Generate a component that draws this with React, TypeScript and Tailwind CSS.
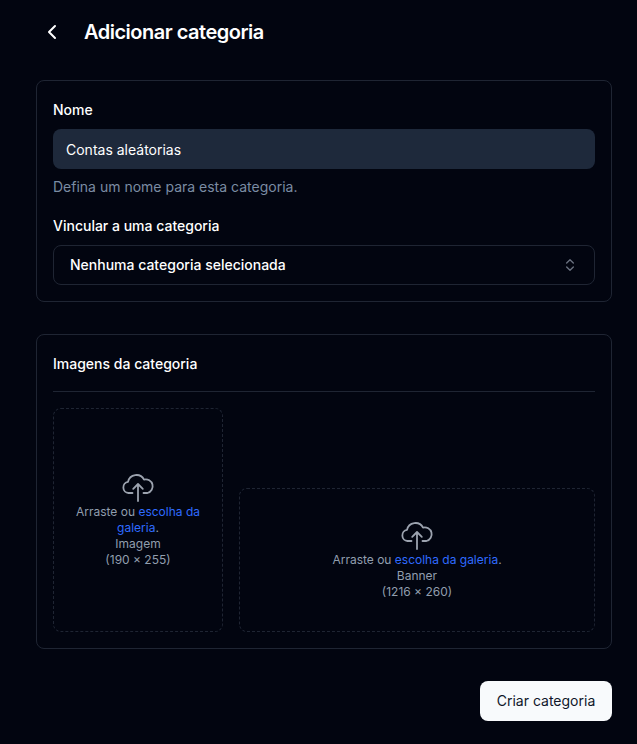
import { ChevronLeft, ChevronsUpDown } from 'lucide-react';

function CloudUp() {
  return (
    <svg width="36" height="32" viewBox="0 0 36 32" fill="none" stroke="#9ca3af" strokeWidth="1.8" strokeLinecap="round" strokeLinejoin="round">
      <path d="M12.5 21H8.5A5.6 5.6 0 0 1 8 9.9A8.6 8.6 0 0 1 24 7.6A6.9 6.9 0 0 1 27.5 21H23.5" />
      <path d="M18 29V12M13.2 16.8L18 12L22.8 16.8" />
    </svg>
  );
}

function Dropzone({ label, size, className }: { label: string; size: string; className: string }) {
  return (
    <div className={`flex flex-col items-center justify-center rounded-lg border border-dashed border-[#1f2533] px-4 text-center text-xs leading-4 text-[#919eae] ${className}`}>
      <CloudUp />
      <p>
        Arraste ou <span className="text-[#2f6bff]">escolha da galeria</span>.
      </p>
      <p>{label}</p>
      <p>({size})</p>
    </div>
  );
}

export default function App() {
  return (
    <div className="min-h-screen bg-[#020510] pl-9 pr-[25px] pt-[18px] font-['Inter',sans-serif] text-white">
      <div className="flex items-center gap-5 pl-1 mb-[34px]">
        <ChevronLeft size={24} />
        <h1 className="text-xl leading-7 font-semibold tracking-tight">Adicionar categoria</h1>
      </div>

      <section className="rounded-lg border border-[#1f2533] px-4 pt-[19px] pb-4">
        <label className="block text-sm leading-5 font-medium mb-[9px]">Nome</label>
        <div className="flex h-10 items-center rounded-lg bg-[#1e293b] pl-[13px] pt-px text-sm">
          Contas aleátorias
        </div>
        <p className="mt-2 text-sm leading-5 text-[#7b8ca3]">Defina um nome para esta categoria.</p>
        <label className="mt-[19px] block text-sm leading-5 font-medium mb-[9px]">Vincular a uma categoria</label>
        <div className="flex h-10 items-center justify-between rounded-lg border border-[#1f2533] pl-4 pr-4 text-sm font-medium">
          Nenhuma categoria selecionada
          <ChevronsUpDown size={16} className="text-[#6b7280]" />
        </div>
      </section>

      <section className="mt-8 rounded-lg border border-[#1f2533] px-4 pt-[19px] pb-4">
        <h2 className="text-sm leading-5 font-medium pb-[17px] border-b border-[#1f2533]">Imagens da categoria</h2>
        <div className="mt-4 flex items-end gap-4">
          <Dropzone label="Imagem" size="190 × 255" className="h-56 w-[170px] shrink-0" />
          <Dropzone label="Banner" size="1216 × 260" className="h-36 flex-1" />
        </div>
      </section>

      <div className="mt-8 flex justify-end">
        <button className="flex h-10 w-[132px] items-center justify-center rounded-lg bg-[#f8fafc] text-sm font-normal text-[#0f172a]">
          Criar categoria
        </button>
      </div>
    </div>
  );
}
